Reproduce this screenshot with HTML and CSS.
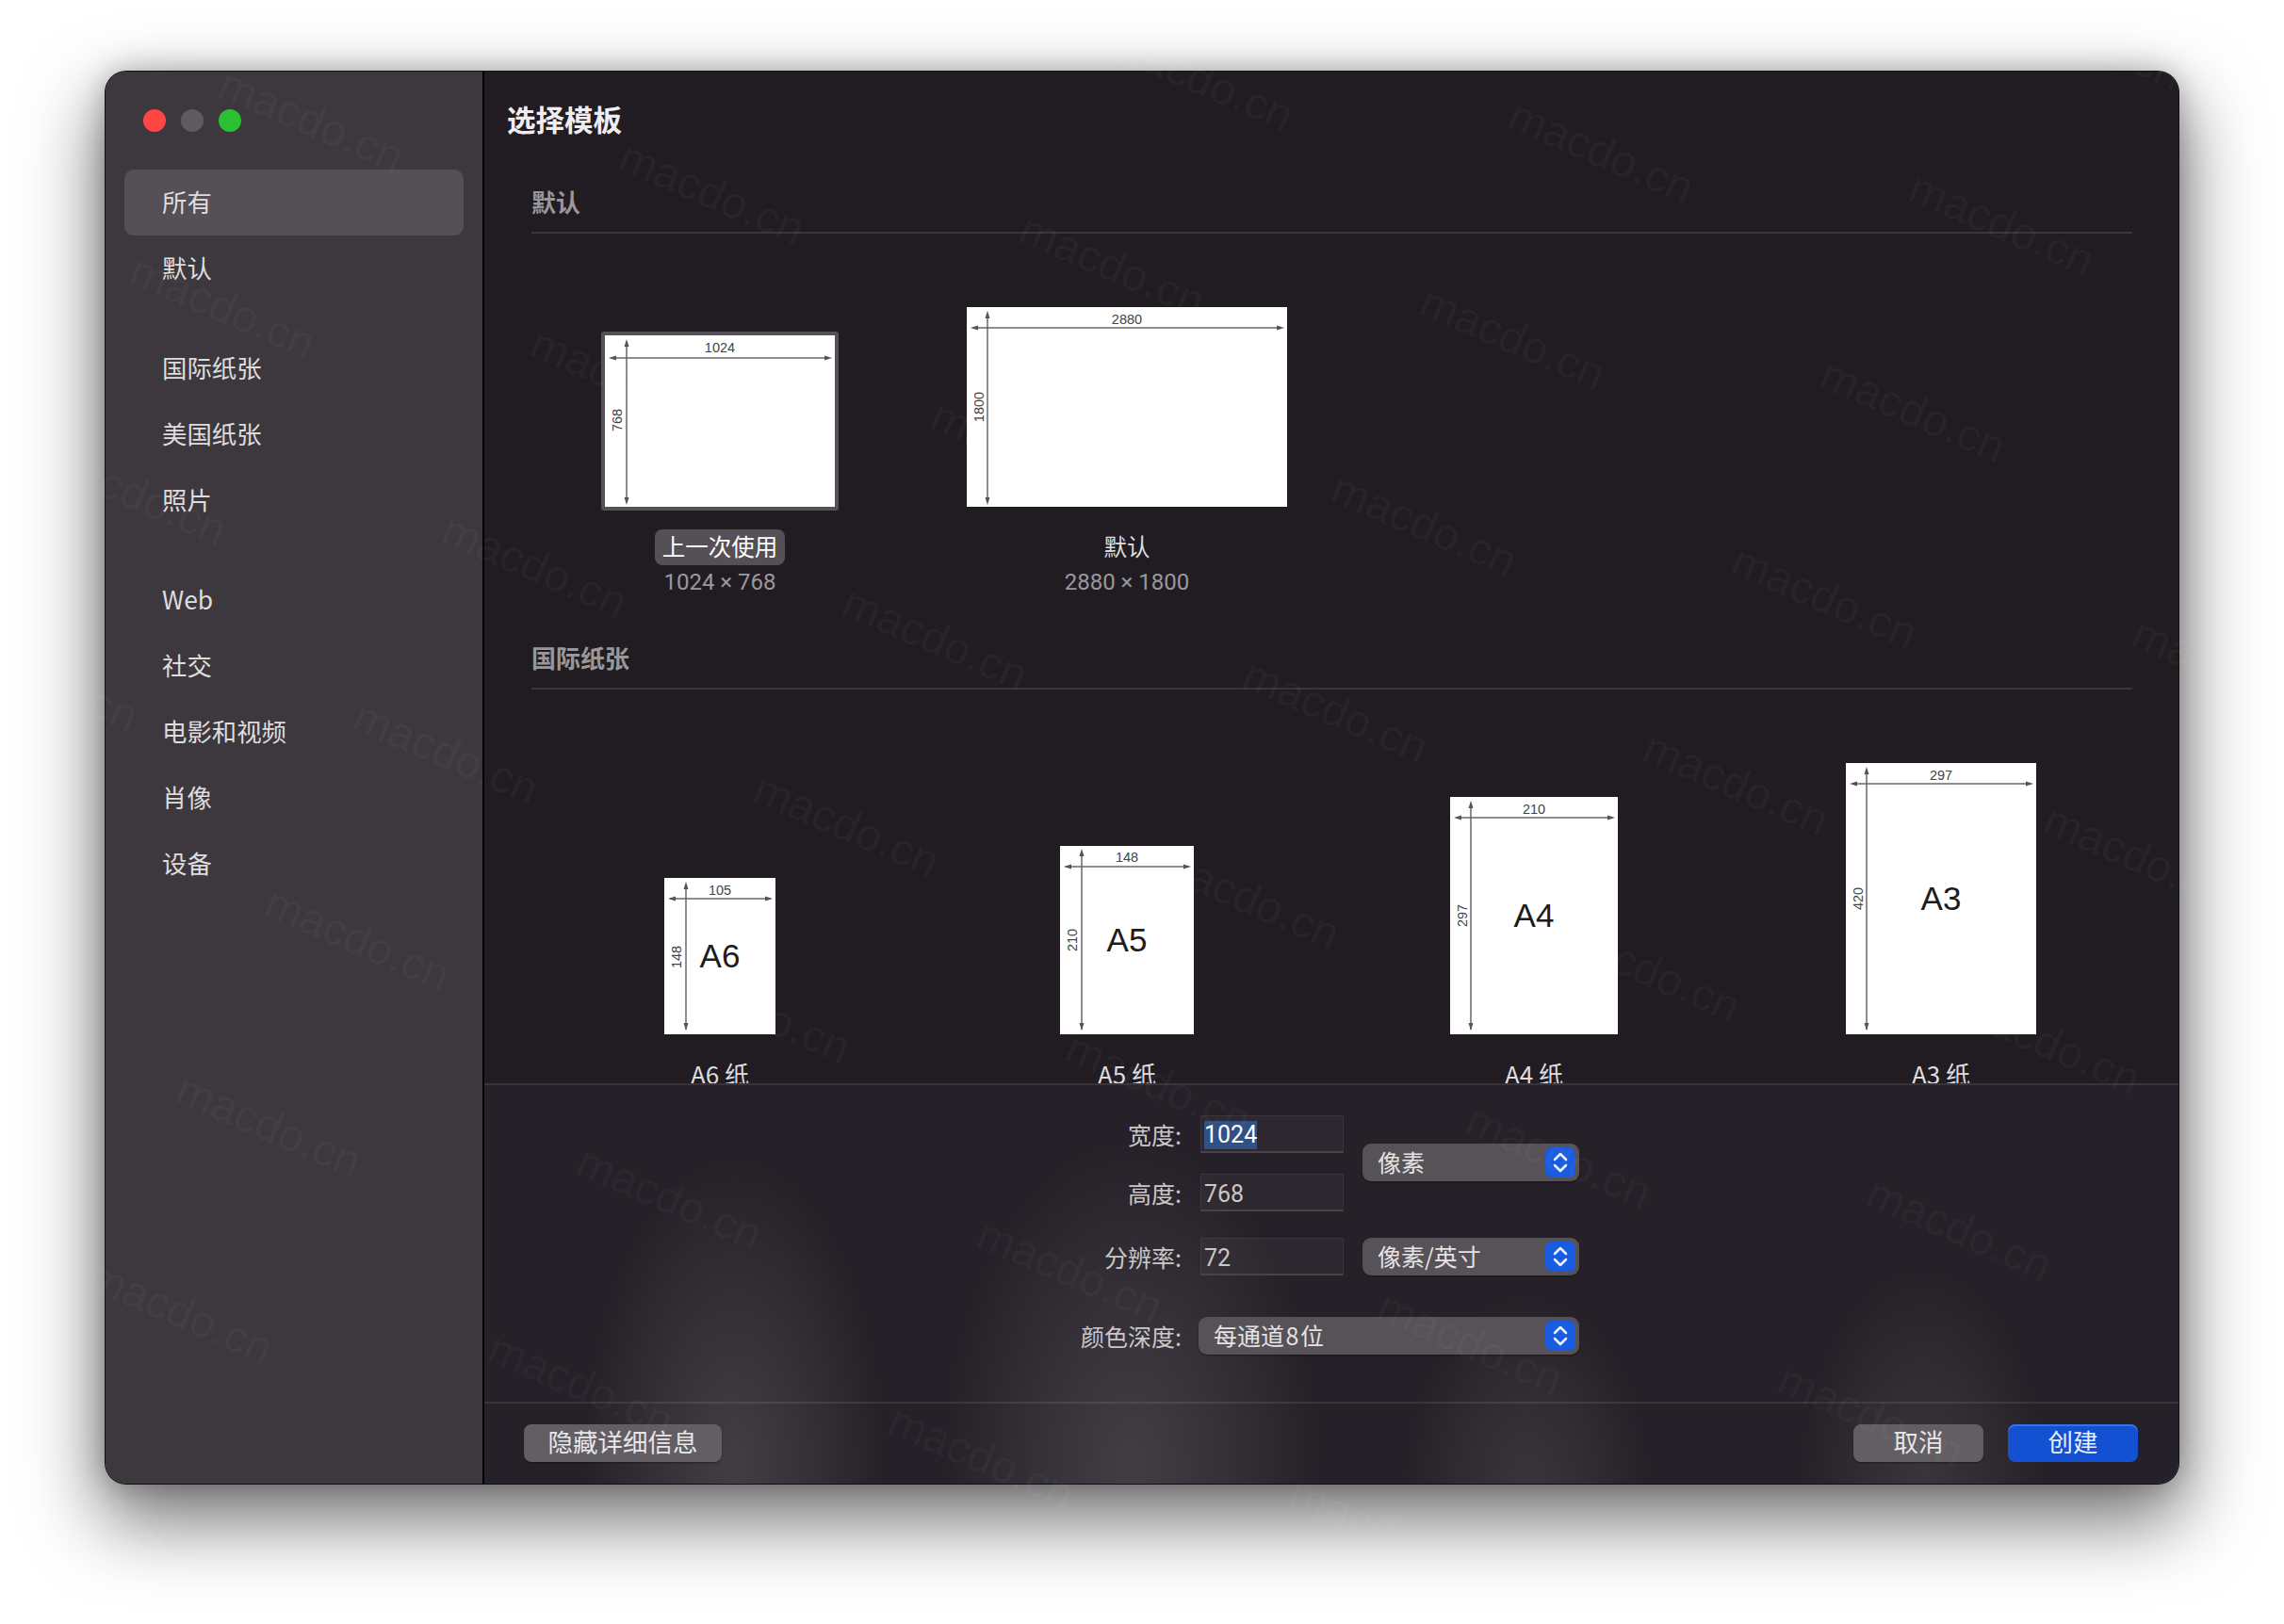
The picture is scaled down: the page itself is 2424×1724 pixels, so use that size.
FILE: index.html
```html
<!DOCTYPE html>
<html lang="zh">
<head>
<meta charset="utf-8">
<title>选择模板</title>
<link rel="stylesheet" href="styles.css">
</head>
<body>
<div class="window">
  <aside class="sidebar">
    <div class="lights"><i class="light red"></i><i class="light gray"></i><i class="light green"></i></div>
    <nav class="nav">
      <div class="nav-group">
        <div class="nav-item active">所有</div>
        <div class="nav-item">默认</div>
      </div>
      <div class="nav-group">
        <div class="nav-item">国际纸张</div>
        <div class="nav-item">美国纸张</div>
        <div class="nav-item">照片</div>
      </div>
      <div class="nav-group">
        <div class="nav-item">Web</div>
        <div class="nav-item">社交</div>
        <div class="nav-item">电影和视频</div>
        <div class="nav-item">肖像</div>
        <div class="nav-item">设备</div>
      </div>
    </nav>
  </aside>
  <main class="main">
    <section class="browser">
      <h1 class="title">选择模板</h1>
      <h2 class="section-head">默认</h2>
      <div class="tiles tiles-default">
        <figure class="tile">
          <div class="thumb-frame">
            <svg class="paper" width="244" height="182" viewBox="0 0 244 182">
              <rect width="244" height="182" fill="#fff"/>
              <path class="dim" d="M23 7V177M6 24H238"/>
              <path class="arrow" d="M23 4l-2.500 8h5zM23 180l-2.500-8h5zM4 24l8-2.500v5zM241 24l-8-2.500v5z"/>
              <text class="dim-text" x="122" y="18" text-anchor="middle">1024</text>
              <text class="dim-text" transform="translate(18 90) rotate(-90)" text-anchor="middle">768</text>
            </svg>
          </div>
          <figcaption class="cap"><span class="cap-name selected">上一次使用</span><span class="cap-size">1024 × 768</span></figcaption>
        </figure>
        <figure class="tile">
          <svg class="paper" width="340" height="212" viewBox="0 0 340 212">
            <rect width="340" height="212" fill="#fff"/>
            <path class="dim" d="M22 7V207M7 22H334"/>
            <path class="arrow" d="M22 4l-2.500 8h5zM22 210l-2.500-8h5zM4 22l8-2.500v5zM337 22l-8-2.500v5z"/>
            <text class="dim-text" x="170" y="18" text-anchor="middle">2880</text>
            <text class="dim-text" transform="translate(18 106) rotate(-90)" text-anchor="middle">1800</text>
          </svg>
          <figcaption class="cap"><span class="cap-name">默认</span><span class="cap-size">2880 × 1800</span></figcaption>
        </figure>
      </div>
      <h2 class="section-head">国际纸张</h2>
      <div class="tiles tiles-paper">
        <figure class="tile">
          <svg class="paper" width="118" height="166" viewBox="0 0 118 166">
            <rect width="118" height="166" fill="#fff"/>
            <path class="dim" d="M23 7V161M6 22H113"/>
            <path class="arrow" d="M23 4l-2.500 8h5zM23 162l-2.500-8h5zM4 22l8-2.500v5zM115 22l-8-2.500v5z"/>
            <text class="dim-text" x="59" y="18" text-anchor="middle">105</text>
            <text class="dim-text" transform="translate(18 84) rotate(-90)" text-anchor="middle">148</text>
            <text class="size-name" x="59" y="95" text-anchor="middle">A6</text>
          </svg>
          <figcaption class="cap"><span class="cap-name">A6 纸</span></figcaption>
        </figure>
        <figure class="tile">
          <svg class="paper" width="142" height="200" viewBox="0 0 142 200">
            <rect width="142" height="200" fill="#fff"/>
            <path class="dim" d="M23 7V195M6 22H137"/>
            <path class="arrow" d="M23 3l-2.500 8h5zM23 196l-2.500-8h5zM4 22l8-2.500v5zM139 22l-8-2.500v5z"/>
            <text class="dim-text" x="71" y="17" text-anchor="middle">148</text>
            <text class="dim-text" transform="translate(18 100) rotate(-90)" text-anchor="middle">210</text>
            <text class="size-name" x="71" y="112" text-anchor="middle">A5</text>
          </svg>
          <figcaption class="cap"><span class="cap-name">A5 纸</span></figcaption>
        </figure>
        <figure class="tile">
          <svg class="paper" width="178" height="252" viewBox="0 0 178 252">
            <rect width="178" height="252" fill="#fff"/>
            <path class="dim" d="M22 7V247M7 22H172"/>
            <path class="arrow" d="M22 4l-2.500 8h5zM22 248l-2.500-8h5zM4 22l8-2.500v5zM175 22l-8-2.500v5z"/>
            <text class="dim-text" x="89" y="18" text-anchor="middle">210</text>
            <text class="dim-text" transform="translate(18 126) rotate(-90)" text-anchor="middle">297</text>
            <text class="size-name" x="89" y="138" text-anchor="middle">A4</text>
          </svg>
          <figcaption class="cap"><span class="cap-name">A4 纸</span></figcaption>
        </figure>
        <figure class="tile">
          <svg class="paper" width="202" height="288" viewBox="0 0 202 288">
            <rect width="202" height="288" fill="#fff"/>
            <path class="dim" d="M22 7V283M7 22H196"/>
            <path class="arrow" d="M22 4l-2.500 8h5zM22 284l-2.500-8h5zM4 22l8-2.500v5zM199 22l-8-2.500v5z"/>
            <text class="dim-text" x="101" y="18" text-anchor="middle">297</text>
            <text class="dim-text" transform="translate(18 144) rotate(-90)" text-anchor="middle">420</text>
            <text class="size-name" x="101" y="156" text-anchor="middle">A3</text>
          </svg>
          <figcaption class="cap"><span class="cap-name">A3 纸</span></figcaption>
        </figure>
      </div>
    </section>
    <section class="details">
      <div class="form">
        <div class="form-pair">
          <div class="fields">
            <div class="row"><label class="label">宽度:</label><div class="field"><span class="sel-text">1024</span></div></div>
            <div class="row"><label class="label">高度:</label><div class="field">768</div></div>
          </div>
          <div class="select select-unit select-pair"><span>像素</span><svg class="stepper" width="32" height="32" viewBox="0 0 32 32"><rect width="32" height="32" rx="7" fill="#1a5ce0"/><path class="chev" d="M10 13l6-6 6 6M10 19l6 6 6-6"/></svg></div>
        </div>
        <div class="row res-row"><label class="label">分辨率:</label><div class="field">72</div><div class="select select-unit"><span>像素/英寸</span><svg class="stepper" width="32" height="32" viewBox="0 0 32 32"><rect width="32" height="32" rx="7" fill="#1a5ce0"/><path class="chev" d="M10 13l6-6 6 6M10 19l6 6 6-6"/></svg></div></div>
        <div class="row depth-row"><label class="label">颜色深度:</label><div class="select select-wide"><span>每通道&#8202;8&#8202;位</span><svg class="stepper" width="32" height="32" viewBox="0 0 32 32"><rect width="32" height="32" rx="7" fill="#1a5ce0"/><path class="chev" d="M10 13l6-6 6 6M10 19l6 6 6-6"/></svg></div></div>
      </div>
      <div class="actions">
        <button class="btn btn-details">隐藏详细信息</button>
        <div class="actions-right">
          <button class="btn btn-cancel">取消</button>
          <button class="btn btn-primary">创建</button>
        </div>
      </div>
    </section>
  </main>
</div>
<svg class="watermarks" width="2424" height="1724" viewBox="0 0 2424 1724" aria-hidden="true">
  <defs>
    <text id="wm" class="wm-text" transform="rotate(23.500)" text-anchor="middle" dominant-baseline="middle">macdo.cn</text>
    <g id="wm-row">
      <use href="#wm" transform="translate(-850 -154)"/>
      <use href="#wm" transform="translate(-425 -77)"/>
      <use href="#wm"/>
      <use href="#wm" transform="translate(425 77)"/>
      <use href="#wm" transform="translate(850 154)"/>
      <use href="#wm" transform="translate(1275 231)"/>
      <use href="#wm" transform="translate(1700 308)"/>
      <use href="#wm" transform="translate(2125 385)"/>
      <use href="#wm" transform="translate(2550 462)"/>
    </g>
  </defs>
  <use href="#wm-row" transform="translate(517 -265)"/>
  <use href="#wm-row" transform="translate(423 -67)"/>
  <use href="#wm-row" transform="translate(329 131)"/>
  <use href="#wm-row" transform="translate(235 329)"/>
  <use href="#wm-row" transform="translate(141 527)"/>
  <use href="#wm-row" transform="translate(47 725)"/>
  <use href="#wm-row" transform="translate(-47 923)"/>
  <use href="#wm-row" transform="translate(-141 1121)"/>
  <use href="#wm-row" transform="translate(-235 1319)"/>
  <use href="#wm-row" transform="translate(-329 1517)"/>
</svg>
</body>
</html>
```
FILE: styles.css
```css
* { box-sizing: border-box; }
html, body { margin: 0; height: 100%; }
body {
  width: 2424px;
  height: 1724px;
  padding: 76px 112px 149px;
  background: #fff;
  overflow: hidden;
  position: relative;
  font-family: "Noto Sans CJK SC", "Roboto", sans-serif;
  color: #dedcde;
}
.window {
  width: 2200px;
  height: 1499px;
  display: flex;
  border-radius: 22px;
  overflow: hidden;
  background: #211c22;
  box-shadow: 0 0 0 1px #111, inset 0 0 0 2px #666, 0 34px 80px 6px rgba(0, 0, 0, .55), 0 0 30px rgba(0, 0, 0, .25);
}
.sidebar {
  width: 402px;
  flex: none;
  background: #3d383d;
  border-right: 2px solid #000;
  padding: 40px 20px 0 20px;
}
.lights { display: flex; gap: 16px; padding-left: 20px; height: 64px; }
.light { width: 24px; height: 24px; border-radius: 50%; display: block; }
.red { background: #ff4645; }
.gray { background: #5e5a5f; }
.green { background: #2ac131; }
.nav { display: flex; flex-direction: column; gap: 36px; }
.nav-item {
  height: 70px;
  line-height: 68px;
  padding-left: 40px;
  font-size: 26.400px;
  border-radius: 10px;
  color: #dedcde;
  width: 360px;
}
.nav-item.active { background: #545055; }
.main {
  flex: 1;
  min-width: 0;
  display: flex;
  flex-direction: column;
}
.browser {
  height: 1074px;
  flex: none;
  overflow: hidden;
  padding: 29px 49px 0 24px;
  background: #211c22;
}
.title { margin: 0 0 49px; font-size: 30.500px; line-height: 42px; font-weight: 700; color: #efedef; }
.section-head {
  margin: 0 0 0 26px;
  font-size: 26px;
  line-height: 36px;
  font-weight: 700;
  color: #9a979a;
  padding-bottom: 14px;
  border-bottom: 2px solid #39353a;
  height: 52px;
}
.tiles { display: grid; grid-template-columns: repeat(4, 432px); margin-left: 10px; }
.tiles-default { height: 432px; align-content: start; }
.tiles-paper { padding-top: 78px; }
.tile { margin: 0; display: flex; flex-direction: column; align-items: center; justify-content: flex-end; height: 288px; }
.tiles-default .tile { height: 290px; }
.thumb-frame { padding: 4px; margin-bottom: -4px; background: #545055; border-radius: 3px; display: flex; }
.paper { display: block; flex: none; }
.dim { stroke: #6a686a; stroke-width: 1.5; fill: none; }
.arrow { fill: #555356; }
.dim-text { font-family: "Liberation Sans", sans-serif; font-size: 14.500px; fill: #444; }
.size-name { font-family: "Liberation Sans", sans-serif; font-size: 35px; fill: #1c1c1c; }
.cap { display: flex; flex-direction: column; align-items: center; height: 0; overflow: visible; }
.cap-name {
  margin-top: 24px;
  font-size: 24.500px;
  line-height: 36px;
  height: 38px;
  padding: 0 8px;
  border-radius: 8px;
  color: #dedcde;
  white-space: nowrap;
  flex: none;
}
.tiles-paper .cap-name { font-size: 26px; }
.cap-name.selected { background: #545055; color: #fff; }
.cap-size { font-family: "Roboto", sans-serif; font-size: 24px; line-height: 36px; color: #9b989b; white-space: nowrap; flex: none; }
.details {
  flex: 1;
  position: relative;
  border-top: 2px solid #38343a;
  background-color: #262128;
  background-image:
    radial-gradient(ellipse 160px 330px at 265px 96%, rgba(255,255,255,.13), rgba(255,255,255,.07) 50%, transparent 100%),
    radial-gradient(ellipse 200px 350px at 687px 96%, rgba(255,255,255,.13), rgba(255,255,255,.07) 50%, transparent 100%),
    radial-gradient(ellipse 130px 200px at 1107px 100%, rgba(255,255,255,.09), rgba(255,255,255,.05) 50%, transparent 100%),
    radial-gradient(ellipse 130px 230px at 1527px 100%, rgba(255,255,255,.09), rgba(255,255,255,.05) 50%, transparent 100%);
}
.form { padding: 32px 0 0 0; height: 338px; border-bottom: 2px solid rgba(255,255,255,.09); }
.form-pair { display: flex; align-items: flex-start; gap: 20px; }
.fields { display: flex; flex-direction: column; gap: 22px; }
.row { display: flex; align-items: center; height: 40px; }
.label { width: 760px; flex: none; text-align: right; font-size: 25px; padding-right: 20px; color: #c9c7c9; white-space: nowrap; }
.field {
  width: 152px;
  height: 40px;
  flex: none;
  background: rgba(255,255,255,.035);
  border: 1px solid rgba(255,255,255,.06);
  border-bottom: 2px solid #474348;
  font-family: "Roboto", sans-serif;
  font-size: 25px;
  line-height: 42px;
  padding-left: 3px;
  color: #c9c7c9;
}
.sel-text { background: #2f5184; color: #fff; display: inline-block; line-height: 30px; height: 30px; vertical-align: top; margin-top: 5px; }
.res-row { margin-top: 28px; }
.res-row .select { margin-left: 20px; }
.depth-row { margin-top: 44px; }
.select {
  height: 40px;
  display: flex;
  align-items: center;
  justify-content: space-between;
  padding: 0 4px 0 16px;
  background: #565257;
  border-radius: 9px;
  font-size: 25px;
  line-height: 34px;
  color: #e4e2e4;
  box-shadow: 0 1px 2px rgba(0,0,0,.4);
}
.select > span { margin-top: -2px; }
.select-pair { margin-top: 30px; }
.select-unit { width: 230px; }
.select-wide { width: 404px; margin-left: -2px; }
.stepper { flex: none; display: block; }
.chev { fill: none; stroke: #f0f4ff; stroke-width: 2.500; stroke-linecap: round; stroke-linejoin: round; }
.actions { display: flex; justify-content: space-between; padding: 22px 43px 0 42px; }
.actions-right { display: flex; gap: 26px; }
.btn {
  height: 40px;
  border: 0;
  border-radius: 8px;
  font-family: inherit;
  font-size: 26.500px;
  line-height: 36px;
  padding: 0 0 5px;
  color: #e8e6e8;
  background: #625e63;
  box-shadow: 0 1px 2px rgba(0,0,0,.4);
}
.btn-details { width: 210px; }
.btn-cancel { width: 138px; }
.btn-primary { width: 138px; background: #1450d2; color: #e8eeff; box-shadow: inset 0 2px 0 #3a74ea; }
.watermarks { position: absolute; left: 0; top: 0; pointer-events: none; }
.wm-text { font-family: "Liberation Sans", sans-serif; font-size: 48px; fill: rgba(255,255,255,.045); }
```
